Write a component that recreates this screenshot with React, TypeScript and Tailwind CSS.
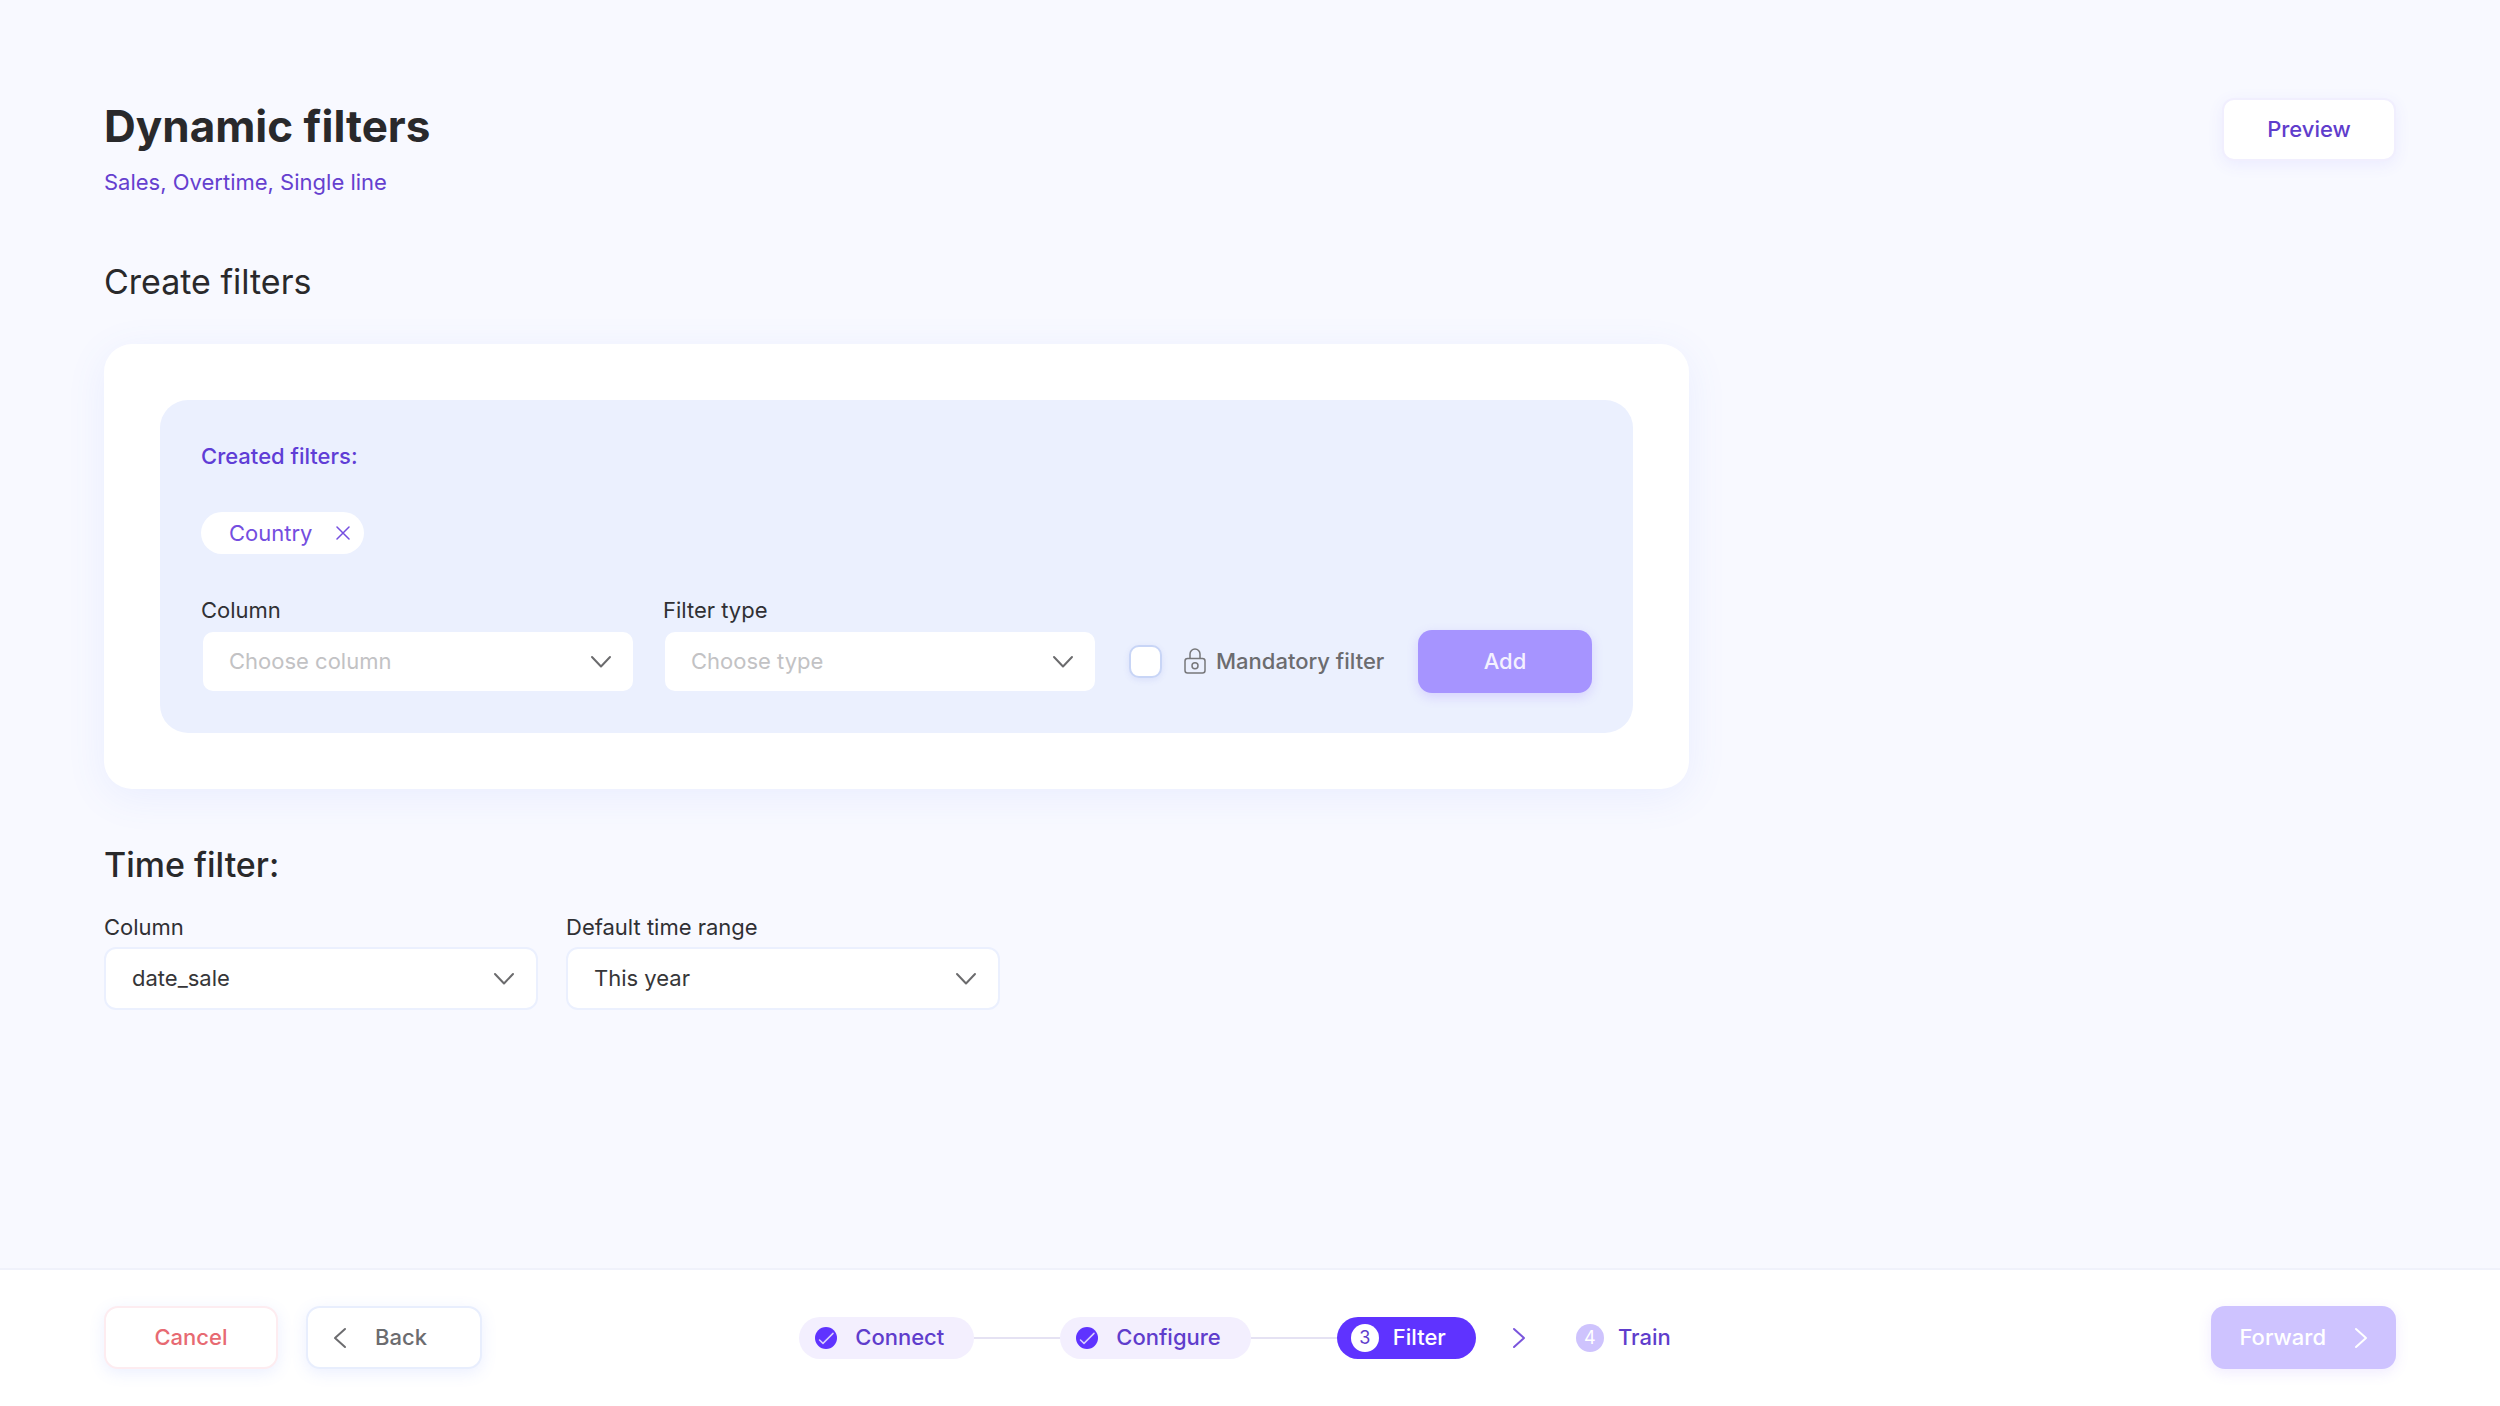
import { useState } from "react";
import type { ReactNode } from "react";
import clsx from "clsx";

type Option = { value: string; label: string };

function ChevronDown() {
    return (
        <svg width="22" height="14" viewBox="0 0 22 14" fill="none" className="pointer-events-none absolute right-[23px] top-[25px]">
            <path d="M2 2L11 11.5L20 2" stroke="#6b6b6d" strokeWidth="2" strokeLinecap="round" strokeLinejoin="round" />
        </svg>
    );
}

function Chevron({ direction }: { direction: "left" | "right" }) {
    return (
        <svg width="14" height="22" viewBox="0 0 14 22" fill="none" className="shrink-0">
            <path
                d={direction === "left" ? "M12 2L2 11L12 20" : "M2 2L12 11L2 20"}
                stroke="currentColor"
                strokeWidth="2"
                strokeLinecap="round"
                strokeLinejoin="round"
            />
        </svg>
    );
}

function CheckCircle() {
    return (
        <svg width="22" height="22" viewBox="0 0 22 22" fill="none" className="shrink-0">
            <circle cx="11" cy="11" r="11" fill="#5f33ff" />
            <path d="M4.5 13L8 16.4L18 6.4" stroke="#d9cffc" strokeWidth="1.5" strokeLinecap="round" strokeLinejoin="round" />
        </svg>
    );
}

function LockIcon() {
    return (
        <svg width="22" height="28" viewBox="0 0 22 28" fill="none" stroke="#77777a" strokeWidth="1.5" className="shrink-0">
            <rect x="1" y="10.5" width="20" height="14.5" rx="2.5" />
            <path d="M6 10.5V6a5 5 0 0 1 10 0v4.5" />
            <circle cx="11" cy="17.7" r="3" />
        </svg>
    );
}

type SelectFieldProps = {
    id: string;
    label: string;
    options: Option[];
    placeholder?: string;
};

function SelectField({ id, label, options, placeholder }: SelectFieldProps) {
    const [value, setValue] = useState(placeholder ? "" : options[0].value);

    return (
        <div className="w-[434px]">
            <label htmlFor={id} className="block text-[22px] leading-8 text-[#303034]">
                {label}
            </label>
            <div className="relative mt-1">
                <select
                    id={id}
                    value={value}
                    onChange={(e) => setValue(e.target.value)}
                    className={clsx(
                        "h-[63px] w-full appearance-none rounded-xl border-2 border-[#ebf0fe] bg-white px-[26px] text-[22px] outline-none",
                        value ? "text-[#363638]" : "text-[#c2c2c4]"
                    )}
                >
                    {placeholder && <option value="">{placeholder}</option>}
                    {options.map((option) => (
                        <option key={option.value} value={option.value}>
                            {option.label}
                        </option>
                    ))}
                </select>
                <ChevronDown />
            </div>
        </div>
    );
}

function Step({ icon, label, className }: { icon: ReactNode; label: string; className: string }) {
    return (
        <a href="#" className={clsx("flex h-[42px] items-center rounded-full pr-[30px] text-[22px] font-medium", className)}>
            {icon}
            {label}
        </a>
    );
}

const columnOptions = [
    { value: "country", label: "Country" },
    { value: "product", label: "Product" },
];

const typeOptions = [
    { value: "single", label: "Single choice" },
    { value: "multiple", label: "Multiple choice" },
];

const dateOptions = [{ value: "date_sale", label: "date_sale" }];

const rangeOptions = [
    { value: "this_year", label: "This year" },
    { value: "last_year", label: "Last year" },
];

export default function App() {
    const [filters, setFilters] = useState(["Country"]);
    const [mandatory, setMandatory] = useState(false);

    return (
        <div className="flex min-h-screen flex-col bg-[#f8f9ff] font-['Inter',sans-serif] text-[#29292b]">
            <main className="flex-1 px-[104px] pt-[98px]">
                <header className="flex items-start justify-between">
                    <div>
                        <h1 className="text-[44px] leading-[56px] font-bold">Dynamic filters</h1>
                        <p className="mt-3 text-[22px] leading-8 text-[#6540cf]">Sales, Overtime, Single line</p>
                    </div>
                    <button
                        type="button"
                        className="h-[63px] w-[174px] rounded-xl border-2 border-[#f1effe] bg-white text-[22px] font-medium text-[#5f3dcc] shadow-[0_4px_16px_rgba(95,80,255,0.08)]"
                    >
                        Preview
                    </button>
                </header>

                <section>
                    <h2 className="mt-16 text-[34px] leading-10">Create filters</h2>
                    <div className="mt-[42px] max-w-[1585px] rounded-[28px] bg-white p-14 shadow-[0_8px_40px_rgba(90,120,255,0.09)]">
                        <div className="rounded-[28px] bg-[#ebf0fe] px-[41px] py-10">
                            <h3 className="text-[22px] leading-8 font-medium text-[#5f3dd6]">Created filters:</h3>
                            <ul className="mt-10 flex h-[42px] gap-4">
                                {filters.map((filter) => (
                                    <li key={filter} className="flex items-center rounded-full bg-white pr-[14px] pl-7 text-[22px] text-[#744ee0]">
                                        {filter}
                                        <button
                                            type="button"
                                            aria-label="Remove filter"
                                            onClick={() => setFilters(filters.filter((item) => item !== filter))}
                                            className="ml-6"
                                        >
                                            <svg width="14" height="14" viewBox="0 0 14 14" fill="none">
                                                <path d="M1 1L13 13M13 1L1 13" stroke="currentColor" strokeWidth="1.5" strokeLinecap="round" />
                                            </svg>
                                        </button>
                                    </li>
                                ))}
                            </ul>

                            <div className="mt-10 flex items-end">
                                <div className="flex gap-7">
                                    <SelectField id="filter-column" label="Column" options={columnOptions} placeholder="Choose column" />
                                    <SelectField id="filter-type" label="Filter type" options={typeOptions} placeholder="Choose type" />
                                </div>
                                <label className="ml-8 flex h-[63px] items-center text-[22px] font-medium text-[#6c6c6f]">
                                    <input
                                        type="checkbox"
                                        checked={mandatory}
                                        onChange={(e) => setMandatory(e.target.checked)}
                                        className="mr-[22px] size-[33px] appearance-none rounded-[10px] border-2 border-[#c8d5f6] bg-white shadow-[0_2px_6px_rgba(90,110,220,0.12)] checked:bg-[#5f33ff]"
                                    />
                                    <LockIcon />
                                    <span className="ml-[10px]">Mandatory filter</span>
                                </label>
                                <button
                                    type="button"
                                    className="ml-auto h-[63px] w-[174px] rounded-[14px] bg-[#a694ff] text-[22px] font-medium text-[#f4f1ff] shadow-[0_4px_12px_rgba(130,90,255,0.2)]"
                                >
                                    Add
                                </button>
                            </div>
                        </div>
                    </div>
                </section>

                <section className="mt-14">
                    <h2 className="text-[34px] leading-10 font-medium">Time filter:</h2>
                    <div className="mt-[26px] flex gap-7">
                        <SelectField id="time-column" label="Column" options={dateOptions} />
                        <SelectField id="time-range" label="Default time range" options={rangeOptions} />
                    </div>
                </section>
            </main>

            <footer className="grid grid-cols-[1fr_auto_1fr] items-center border-t-2 border-[#f0f2fb] bg-white px-[104px] pt-9 pb-[37px] text-[22px] font-medium">
                <div className="flex gap-7">
                    <button
                        type="button"
                        className="h-[63px] w-[174px] rounded-[14px] border-2 border-[#fdecf0] bg-white text-[#e76a72] shadow-[0_4px_16px_rgba(90,120,255,0.12)]"
                    >
                        Cancel
                    </button>
                    <button
                        type="button"
                        className="flex h-[63px] w-[176px] items-center rounded-[14px] border-2 border-[#e8eefd] bg-white pl-[25px] text-[#6c6c6f] shadow-[0_4px_16px_rgba(90,120,255,0.12)]"
                    >
                        <Chevron direction="left" />
                        <span className="ml-7">Back</span>
                    </button>
                </div>

                <nav className="flex items-center">
                    <Step label="Connect" icon={<CheckCircle />} className="gap-[18px] bg-[#f3effe] pl-4 text-[#5f3dcc]" />
                    <div className="h-0.5 w-[86px] bg-[#e5e2f3]" />
                    <Step label="Configure" icon={<CheckCircle />} className="gap-[18px] bg-[#f3effe] pl-4 text-[#5f3dcc]" />
                    <div className="h-0.5 w-[86px] bg-[#e5e2f3]" />
                    <Step
                        label="Filter"
                        icon={<span className="flex size-7 items-center justify-center rounded-full bg-white text-lg font-normal text-[#5f3dcc]">3</span>}
                        className="gap-[14px] bg-[#5f33ff] pl-[14px] text-white"
                    />
                    <div className="ml-9 text-[#7a55dc]">
                        <Chevron direction="right" />
                    </div>
                    <Step
                        label="Train"
                        icon={<span className="flex size-7 items-center justify-center rounded-full bg-[#cec3fd] text-lg font-normal text-white">4</span>}
                        className="ml-9 gap-[14px] pl-[14px] text-[#5f3dcc]"
                    />
                </nav>

                <button
                    type="button"
                    disabled
                    className="flex h-[63px] items-center justify-self-end rounded-[14px] bg-[#cec3ff] pr-7 pl-7 text-white shadow-[0_4px_14px_rgba(130,90,255,0.12)]"
                >
                    Forward
                    <span className="ml-7">
                        <Chevron direction="right" />
                    </span>
                </button>
            </footer>
        </div>
    );
}
